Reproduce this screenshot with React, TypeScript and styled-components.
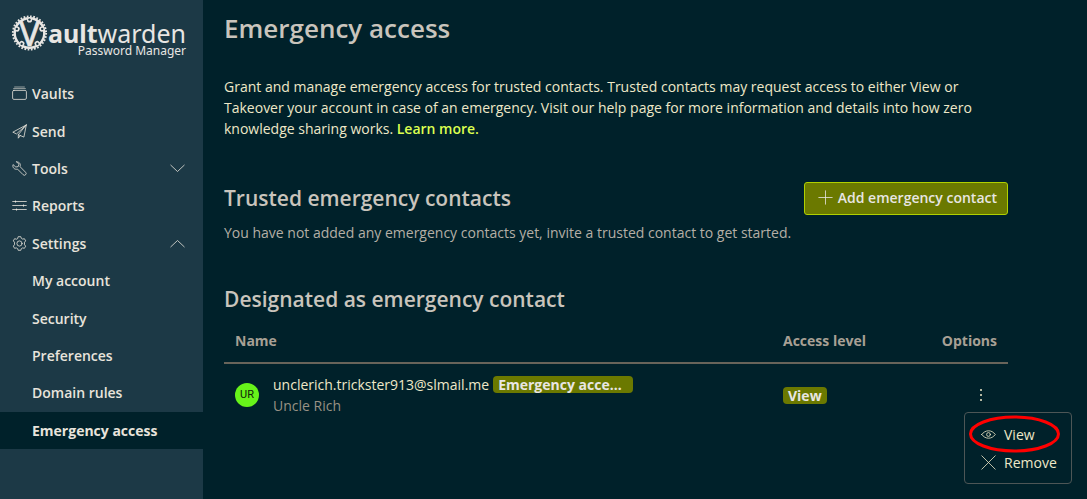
import React from 'react';
import styled, { createGlobalStyle } from 'styled-components';

const GlobalStyle = createGlobalStyle`
  * { box-sizing: border-box; }
  body {
    margin: 0;
    background: #00212a;
    color: #eee8c8;
    font-family: "Open Sans", "Noto Sans", sans-serif;
    font-size: 14px;
    line-height: 21px;
  }
  h1, h2, p { margin: 0; }
  button { font: inherit; cursor: pointer; }
`;

const Page = styled.div`
  display: flex;
  min-height: 100vh;
`;

const Sidebar = styled.aside`
  flex: 0 0 203px;
  background: #1c3946;
  color: #e8e4dc;
`;

const Brand = styled.a`
  display: flex;
  height: 75px;
  padding: 15px 0 0 12px;
  color: #e8e6e3;
  font-family: "Noto Sans", sans-serif;
  text-decoration: none;
`;

const BrandMark = styled.svg`
  flex: none;
  width: 36px;
  height: 36px;
  overflow: visible;
`;

const BrandWords = styled.span`
  display: flex;
  flex-direction: column;
  width: 138px;
  padding-top: 6px;
`;

const BrandName = styled.span`
  font-size: 25px;
  line-height: 24px;
  white-space: nowrap;
`;

const BrandTagline = styled.span`
  font-size: 12px;
  line-height: 12px;
  text-align: right;
`;

const NavList = styled.nav`
  display: grid;
  grid-auto-rows: 1fr;
  min-height: 374px;
`;

const NavItem = styled.a<{ $active?: boolean; $nested?: boolean }>`
  display: flex;
  align-items: center;
  gap: 5px;
  padding: 0 18px 0 ${p => (p.$nested ? 32 : 12)}px;
  background: ${p => (p.$active ? '#00212a' : 'transparent')};
  color: inherit;
  font-weight: ${p => (p.$active ? 700 : 600)};
  text-decoration: none;
`;

const NavLabel = styled.span`
  flex: 1;
`;

const Icon = styled.svg<{ $size?: number }>`
  flex: none;
  width: ${p => p.$size ?? 15}px;
  height: ${p => p.$size ?? 15}px;
  fill: none;
  stroke: currentColor;
  stroke-width: 0.8;
  stroke-linecap: round;
  stroke-linejoin: round;
`;

const Main = styled.main`
  flex: 1;
  min-width: 0;
  padding: 10px 79px 0 21px;
`;

const PageTitle = styled.h1`
  color: #c9c4bc;
  font-size: 26px;
  font-weight: 600;
  line-height: 36px;
`;

const Intro = styled.p`
  margin-top: 30px;
`;

const LearnMore = styled.a`
  color: #dcff50;
  font-weight: 600;
  text-decoration: none;
`;

const SectionHeader = styled.div`
  display: flex;
  align-items: flex-start;
  justify-content: space-between;
  margin-top: 43px;
`;

const SectionTitle = styled.h2`
  color: #c9c4bc;
  font-size: 21px;
  font-weight: 600;
  line-height: 32px;
`;

const AddButton = styled.button`
  display: flex;
  align-items: center;
  gap: 5px;
  height: 33px;
  padding: 0 10px 2px 13px;
  border: 1px solid #b0d000;
  border-radius: 3px;
  background: #6b7900;
  color: #e8e6e3;
  font-weight: 600;
`;

const EmptyNote = styled.p`
  margin: 7px 0 40px;
  color: #b4afa6;
`;

const Contacts = styled.table`
  width: 100%;
  margin-top: 5px;
  border-collapse: collapse;
  table-layout: fixed;
`;

const HeadCell = styled.th<{ $width?: number; $end?: boolean }>`
  width: ${p => (p.$width ? p.$width + 'px' : 'auto')};
  padding: 10px 11px 11px;
  border-bottom: 2px solid #68645a;
  color: #a8a095;
  font-weight: 700;
  text-align: ${p => (p.$end ? 'right' : 'left')};
`;

const Cell = styled.td`
  padding: 10px 11px;
  vertical-align: middle;
`;

const Person = styled.div`
  display: flex;
  align-items: center;
  gap: 14px;
`;

const Avatar = styled.span`
  display: grid;
  place-items: center;
  width: 24px;
  height: 24px;
  border-radius: 50%;
  background: #67f31a;
  color: #10240a;
  font: 11px/14px Roboto, sans-serif;
`;

const Email = styled.div`
  display: flex;
  align-items: center;
  gap: 4px;
`;

const Badge = styled.span<{ $width?: number }>`
  display: block;
  width: ${p => (p.$width ? p.$width + 'px' : 'fit-content')};
  padding: 0 5px;
  overflow: hidden;
  border-radius: 4px;
  background: #6b7900;
  color: #e8e6e3;
  font-weight: 700;
  line-height: 17px;
  text-overflow: ellipsis;
  white-space: nowrap;
`;

const PersonName = styled.div`
  color: #989184;
`;

const OptionsCell = styled(Cell)`
  padding-right: 19px;
`;

const MenuAnchor = styled.div`
  position: relative;
  width: 16px;
  margin-left: auto;
`;

const MoreButton = styled.button`
  display: flex;
  padding: 0;
  border: 0;
  background: none;
  color: #eee8c8;
`;

const Menu = styled.div`
  position: absolute;
  top: 25px;
  left: -9px;
  width: 108px;
  padding: 7px 0;
  border: 1px solid #4d5656;
  border-radius: 4px;
  background: #00212a;
`;

const MenuItem = styled.button`
  display: flex;
  align-items: center;
  gap: 8px;
  width: 100%;
  height: 28px;
  padding: 0 0 0 16px;
  border: 0;
  background: none;
  color: #eee8c8;
`;

const Highlight = styled.svg`
  position: absolute;
  top: 2px;
  left: 3px;
  width: 93px;
  height: 38px;
  fill: none;
  stroke: #ff0000;
  stroke-width: 3;
  pointer-events: none;
`;

const icons: Record<string, React.ReactNode> = {
  vault: (
    <>
      <rect x=".6" y="4.4" width="13.8" height="9" rx="1.3" />
      <path d="M1.6 2.6h11.8M2.6 1h9.8" opacity=".75" />
    </>
  ),
  send: <path d="M14.3.9.8 8.2l3.7 1.7L14.3.9l-8 9.8v3.5l2-2.6M6.3 10.7l5.6 2.4L14.3.9" />,
  tools: (
    <path d="M4.6.9 7 3.2 6.2 5.6 3.8 6 1 3.6C.2 6.4 2.5 9 5.5 8.1l5.6 5.6a1.7 1.7 0 0 0 2.5-2.4L8.1 5.7C9 2.8 7.3.6 4.6.9Z" />
  ),
  reports: (
    <>
      <path d="M.7 3.5h13.6M.7 7.5h13.6M.7 11.5h13.6" />
      <path d="M3.5 3v1M11.5 7v1M4.5 11v1" strokeWidth="1.2" />
    </>
  ),
  settings: (
    <>
      <path d="M5.7 2.3 6.2.7h2.6l.5 1.6 1.4.8 1.7-.4 1.3 2.2-1.2 1.3v2.6l1.2 1.3-1.3 2.2-1.7-.4-1.4.8-.5 1.6H6.2l-.5-1.6-1.4-.8-1.7.4-1.3-2.2 1.2-1.3V6.2L1.3 4.9l1.3-2.2 1.7.4Z" />
      <circle cx="7.5" cy="7.5" r="2.6" />
    </>
  ),
  down: <path d="m.8 4.2 6.7 6.3 6.7-6.3" />,
  up: <path d="m.8 10.8 6.7-6.3 6.7 6.3" />,
  plus: <path d="M7.5.8v13.4M.8 7.5h13.4" />,
  eye: (
    <>
      <path d="M.7 7.5c3.6-5 10-5 13.6 0-3.6 5-10 5-13.6 0Z" />
      <circle cx="7.5" cy="7.5" r="1.9" />
    </>
  ),
  close: <path d="m.8.8 13.4 13.4M14.2.8.8 14.2" />,
};

const Glyph = ({ name }: { name: string }) => (
  <Icon viewBox="0 0 15 15" aria-hidden="true">
    {icons[name]}
  </Icon>
);

const navigation = [
  { label: 'Vaults', icon: 'vault' },
  { label: 'Send', icon: 'send' },
  { label: 'Tools', icon: 'tools', arrow: 'down' },
  { label: 'Reports', icon: 'reports' },
  { label: 'Settings', icon: 'settings', arrow: 'up' },
  { label: 'My account' },
  { label: 'Security' },
  { label: 'Preferences' },
  { label: 'Domain rules' },
  { label: 'Emergency access', active: true },
];

const Logo = () => (
  <BrandMark viewBox="0 0 36 36" aria-hidden="true">
    <circle cx="17.5" cy="18" r="16.6" fill="none" stroke="currentColor" strokeWidth="2" strokeDasharray="1.7 1.56" />
    <circle cx="17.5" cy="18" r="14.8" fill="none" stroke="currentColor" strokeWidth="2.4" />
    {[0, 72, 144, 216, 288].map(angle => (
      <g key={angle} transform={`rotate(${angle} 17.5 18)`}>
        <circle cx="17.5" cy="5" r="2.6" fill="currentColor" />
        <circle cx="17.5" cy="4.6" r="1.2" fill="#1c3946" />
      </g>
    ))}
    <text
      x="17.5"
      y="31"
      textAnchor="middle"
      fontSize="35"
      fontWeight="400"
      fill="currentColor"
      stroke="currentColor"
      strokeWidth=".6"
    >
      V
    </text>
  </BrandMark>
);

export default function App() {
  return (
    <>
      <GlobalStyle />
      <Page>
        <Sidebar>
          <Brand href="#" aria-label="Vaultwarden Password Manager">
            <Logo />
            <BrandWords>
              <BrandName>
                <b>ault</b>warden
              </BrandName>
              <BrandTagline>Password Manager</BrandTagline>
            </BrandWords>
          </Brand>
          <NavList>
            {navigation.map(item => (
              <NavItem key={item.label} href="#" $active={item.active} $nested={!item.icon}>
                {item.icon && <Glyph name={item.icon} />}
                <NavLabel>{item.label}</NavLabel>
                {item.arrow && <Glyph name={item.arrow} />}
              </NavItem>
            ))}
          </NavList>
        </Sidebar>
        <Main>
          <PageTitle>Emergency access</PageTitle>
          <Intro>
            Grant and manage emergency access for trusted contacts. Trusted contacts may request access to either View
            or Takeover your account in case of an emergency. Visit our help page for more information and details into
            how zero knowledge sharing works. <LearnMore href="#">Learn more.</LearnMore>
          </Intro>
          <SectionHeader>
            <SectionTitle>Trusted emergency contacts</SectionTitle>
            <AddButton type="button">
              <Glyph name="plus" />
              Add emergency contact
            </AddButton>
          </SectionHeader>
          <EmptyNote>You have not added any emergency contacts yet, invite a trusted contact to get started.</EmptyNote>
          <SectionTitle>Designated as emergency contact</SectionTitle>
          <Contacts>
            <thead>
              <tr>
                <HeadCell>Name</HeadCell>
                <HeadCell $width={136}>Access level</HeadCell>
                <HeadCell $width={100} $end>
                  Options
                </HeadCell>
              </tr>
            </thead>
            <tbody>
              <tr>
                <Cell>
                  <Person>
                    <Avatar>UR</Avatar>
                    <div>
                      <Email>
                        unclerich.trickster913@slmail.me
                        <Badge $width={140}>Emergency access invitation</Badge>
                      </Email>
                      <PersonName>Uncle Rich</PersonName>
                    </div>
                  </Person>
                </Cell>
                <Cell>
                  <Badge>View</Badge>
                </Cell>
                <OptionsCell>
                  <MenuAnchor>
                    <MoreButton type="button" aria-label="Options">
                      <Icon $size={16} viewBox="0 0 16 16" aria-hidden="true">
                        <path d="M8 3h.01M8 8h.01M8 13h.01" strokeWidth="2" />
                      </Icon>
                    </MoreButton>
                    <Menu>
                      <MenuItem type="button">
                        <Glyph name="eye" />
                        View
                      </MenuItem>
                      <MenuItem type="button">
                        <Glyph name="close" />
                        Remove
                      </MenuItem>
                      <Highlight viewBox="0 0 93 38" aria-hidden="true">
                        <ellipse cx="46.5" cy="19" rx="44" ry="17" />
                      </Highlight>
                    </Menu>
                  </MenuAnchor>
                </OptionsCell>
              </tr>
            </tbody>
          </Contacts>
        </Main>
      </Page>
    </>
  );
}
